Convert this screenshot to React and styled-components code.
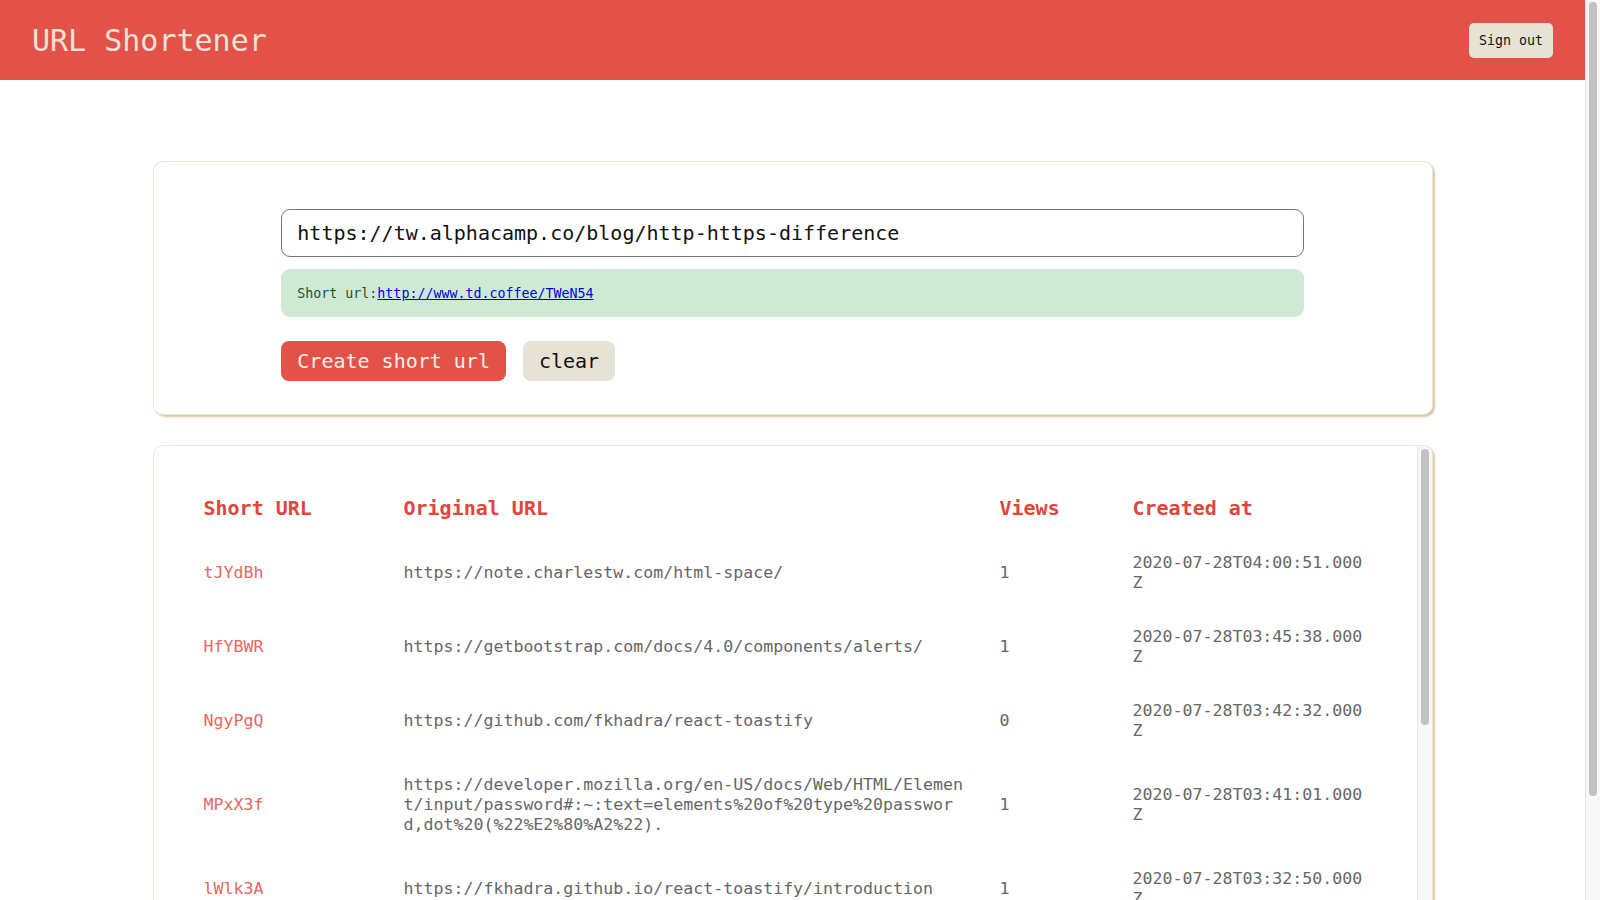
import React from "react";
import styled, { createGlobalStyle } from "styled-components";

const Global = createGlobalStyle`
  * { box-sizing: border-box; }
  html, body { margin: 0; padding: 0; background: #fff; }
  body { font-family: "DejaVu Sans Mono", "Liberation Mono", monospace; }
`;

const Viewport = styled.div`
  display: flex;
  height: 100vh;
  overflow: hidden;
`;

const PageBody = styled.div`
  flex: 1;
  min-width: 0;
  overflow: hidden;
`;

const ScrollTrack = styled.div`
  flex: 0 0 15px;
  width: 15px;
  background: #f8f8f8;
  border-left: 1px solid #e6e6e6;
  padding: ${(p) => p.$pad || "2px 3px 0 3px"};
`;

const ScrollThumb = styled.div`
  width: 8px;
  background: #c1c1c1;
  border-radius: 4px;
`;

const TopBar = styled.header`
  height: 80px;
  background: #e35249;
  display: flex;
  align-items: center;
  justify-content: space-between;
  padding: 0 32px;
`;

const Title = styled.h1`
  margin: 0;
  font-size: 30px;
  font-weight: normal;
  color: #e9e3d6;
  line-height: 1;
  padding-top: 2px;
`;

const SmallButton = styled.button`
  font-family: inherit;
  font-size: 13.3px;
  background: #e6e2d6;
  color: #111;
  border: none;
  border-radius: 5px;
  height: 35px;
  padding: 0 10px;
  cursor: pointer;
`;

const Main = styled.main`
  max-width: 1280px;
  margin: 81px auto 30px;
  display: flex;
  flex-direction: column;
  gap: 30px;
`;

const Card = styled.section`
  background: #fff;
  border: 1px solid #ece6d9;
  border-radius: 10px;
  box-shadow: 2px 2px 2px #d9c6a5;
`;

const FormCard = styled(Card)`
  padding: 47px 0 33px;
  display: flex;
  flex-direction: column;
  align-items: center;
`;

const FormInner = styled.div`
  width: 80%;
  display: flex;
  flex-direction: column;
  gap: 12px;
`;

const UrlInput = styled.input`
  height: 48px;
  width: 100%;
  border: 1px solid #777;
  border-radius: 9px;
  padding: 0 15px;
  font-family: inherit;
  font-size: 20px;
  color: #111;
  outline: none;
`;

const Alert = styled.div`
  height: 48px;
  border-radius: 9px;
  background: #cfe9d5;
  color: #155724;
  font-size: 13.3px;
  display: flex;
  align-items: center;
  padding: 0 16px;
  a { color: #0000ee; }
`;

const Actions = styled.div`
  display: flex;
  gap: 17px;
  margin-top: 12px;
`;

const Button = styled.button`
  font-family: inherit;
  font-size: 20px;
  height: 40px;
  padding: 0 16px;
  border: none;
  border-radius: 8px;
  cursor: pointer;
  background: ${(p) => (p.$primary ? "#e35249" : "#e6e2d6")};
  color: ${(p) => (p.$primary ? "#f7f1e8" : "#111")};
`;

const ListCard = styled(Card)`
  height: 540px;
  display: flex;
  overflow: hidden;
`;

const TableArea = styled.div`
  flex: 1;
  min-width: 0;
  padding: 34px 32px 32px;
  overflow: hidden;
`;

const Table = styled.table`
  width: 100%;
  table-layout: fixed;
  border-spacing: 2px;
  line-height: 20px;
`;

const Th = styled.th`
  width: ${(p) => p.$w || "auto"};
  text-align: left;
  padding: 16px 16px 17px;
  font-size: 20px;
  font-weight: bold;
  color: #e0463c;
`;

const Td = styled.td`
  padding: 16px;
  font-size: 16.6px;
  color: ${(p) => (p.$accent ? "#e6675e" : "#666")};
  word-break: break-all;
  vertical-align: middle;
`;

const rows = [
  ["tJYdBh", "https://note.charlestw.com/html-space/", 1, "2020-07-28T04:00:51.000Z"],
  ["HfYBWR", "https://getbootstrap.com/docs/4.0/components/alerts/", 1, "2020-07-28T03:45:38.000Z"],
  ["NgyPgQ", "https://github.com/fkhadra/react-toastify", 0, "2020-07-28T03:42:32.000Z"],
  ["MPxX3f", "https://developer.mozilla.org/en-US/docs/Web/HTML/Element/input/password#:~:text=elements%20of%20type%20password,dot%20(%22%E2%80%A2%22).", 1, "2020-07-28T03:41:01.000Z"],
  ["lWlk3A", "https://fkhadra.github.io/react-toastify/introduction", 1, "2020-07-28T03:32:50.000Z"],
  ["q8ZrTk", "https://styled-components.com/docs/basics", 2, "2020-07-28T03:20:14.000Z"],
  ["Xa93Lm", "https://reactjs.org/docs/hooks-intro.html", 0, "2020-07-28T03:05:47.000Z"],
  ["pK2wEd", "https://expressjs.com/en/guide/routing.html", 1, "2020-07-28T02:58:09.000Z"],
];

export default function App() {
  return (
    <>
      <Global />
      <Viewport>
        <PageBody>
          <TopBar>
            <Title>URL Shortener</Title>
            <SmallButton>Sign out</SmallButton>
          </TopBar>
          <Main>
            <FormCard>
              <FormInner>
                <UrlInput defaultValue="https://tw.alphacamp.co/blog/http-https-difference" />
                <Alert>
                  Short url:<a href="#">http://www.td.coffee/TWeN54</a>
                </Alert>
                <Actions>
                  <Button $primary>Create short url</Button>
                  <Button>clear</Button>
                </Actions>
              </FormInner>
            </FormCard>
            <ListCard>
              <TableArea>
                <Table>
                  <thead>
                    <tr>
                      <Th $w="198px">Short URL</Th>
                      <Th $w="594px">Original URL</Th>
                      <Th $w="131px">Views</Th>
                      <Th>Created at</Th>
                    </tr>
                  </thead>
                  <tbody>
                    {rows.map((r) => (
                      <tr key={r[0]}>
                        <Td $accent>{r[0]}</Td>
                        <Td>{r[1]}</Td>
                        <Td>{r[2]}</Td>
                        <Td>{r[3]}</Td>
                      </tr>
                    ))}
                  </tbody>
                </Table>
              </TableArea>
              <ScrollTrack $pad="3px 3px 0 3px">
                <ScrollThumb style={{ height: 276 }} />
              </ScrollTrack>
            </ListCard>
          </Main>
        </PageBody>
        <ScrollTrack>
          <ScrollThumb style={{ height: 794 }} />
        </ScrollTrack>
      </Viewport>
    </>
  );
}
